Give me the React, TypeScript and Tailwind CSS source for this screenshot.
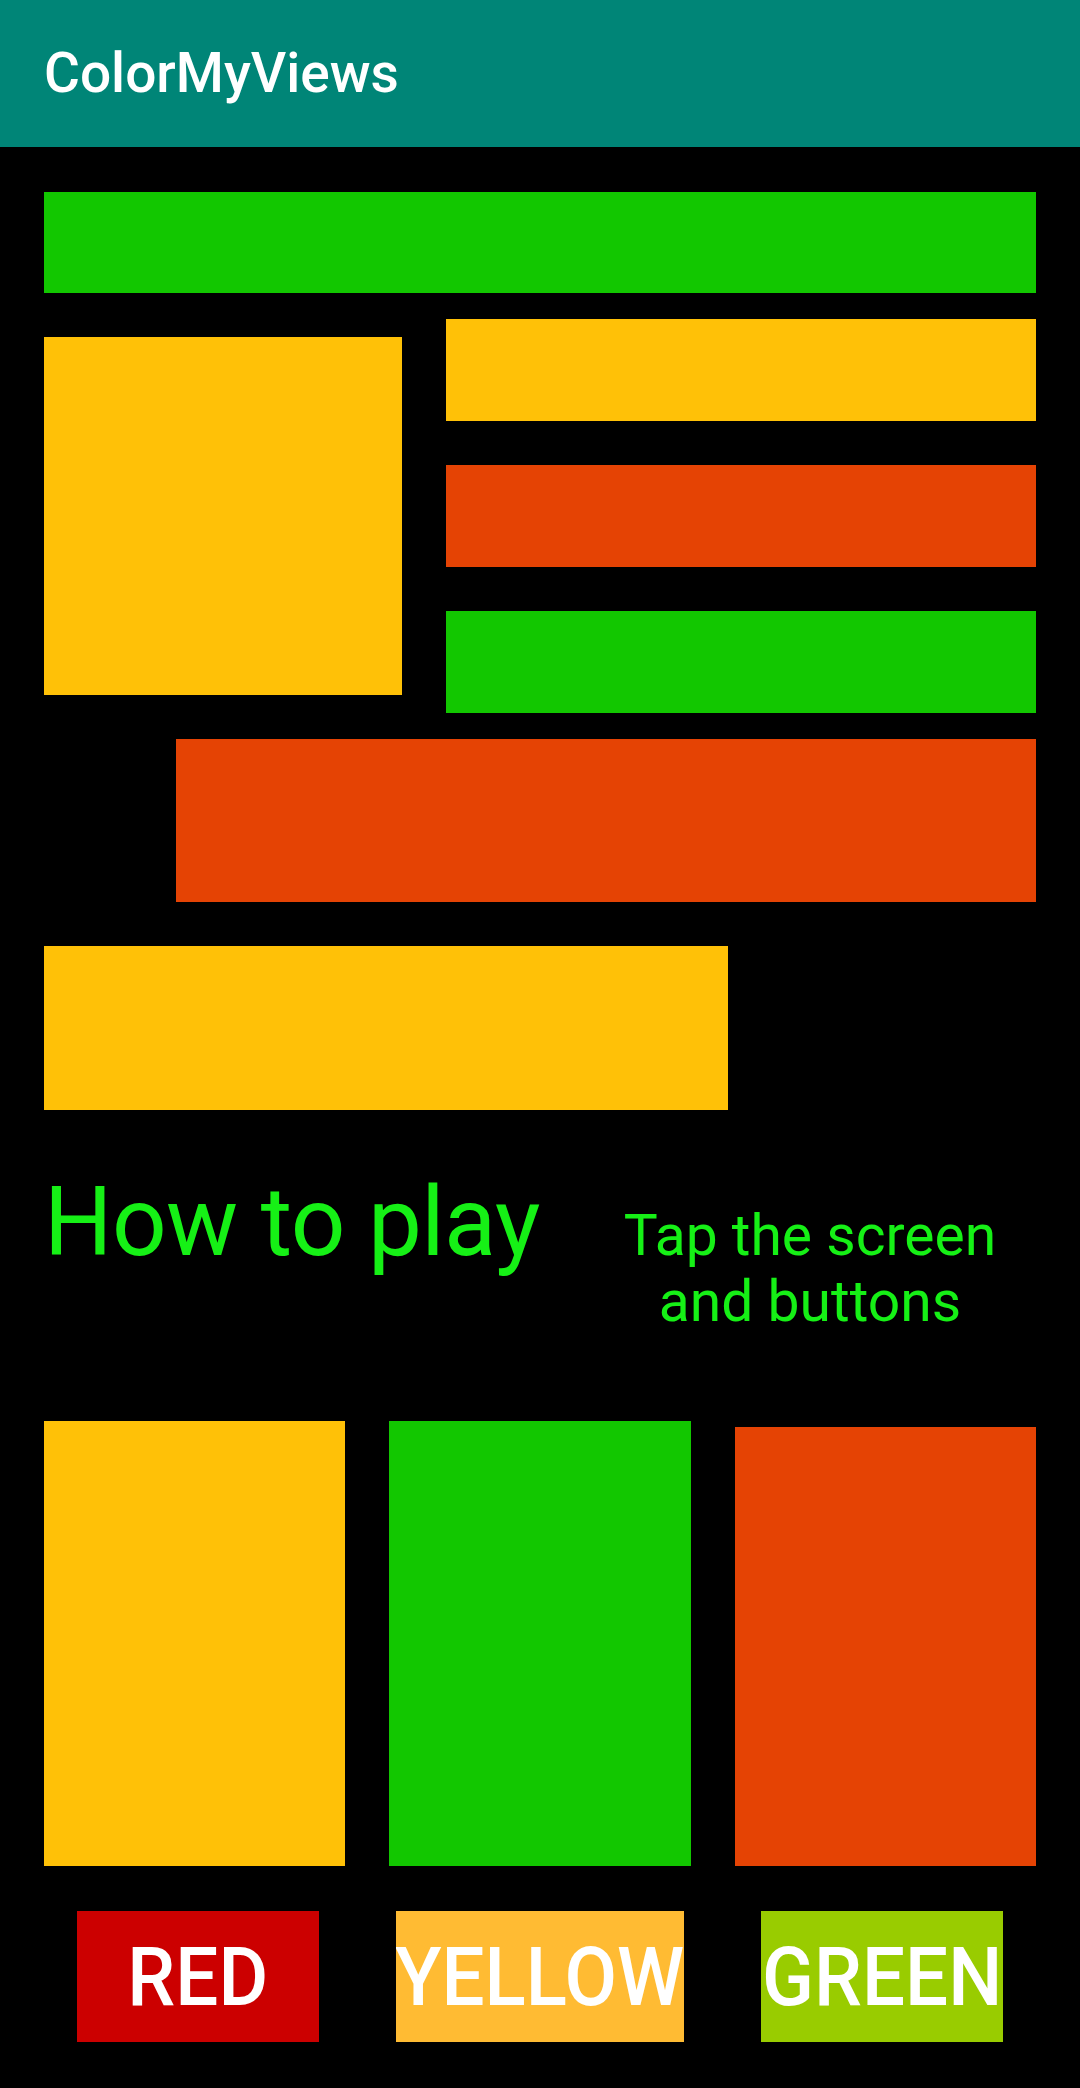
const font = { fontFamily: 'Roboto, "Noto Sans", sans-serif' }

function Box({ className }: { className: string }) {
  return <div className={className} />
}

function ColorButton({ label, className }: { label: string; className: string }) {
  return (
    <button
      className={`flex h-[131px] items-center justify-center overflow-hidden text-[82px] font-medium leading-none text-white ${className}`}
    >
      <span className="inline-block scale-x-[0.93] whitespace-nowrap">{label}</span>
    </button>
  )
}

export default function App() {
  return (
    <div className="flex min-h-[2088px] w-[1080px] flex-col bg-black" style={font}>
      <header className="flex h-[147px] items-center bg-[#008577] pl-[44px]">
        <h1 className="text-[55px] font-medium leading-none text-white">ColorMyViews</h1>
      </header>

      <main className="flex flex-col px-[44px]">
        <Box className="mt-[45px] h-[101px] bg-[#12C700]" />

        <div className="mt-[26px] flex items-center gap-[44px]">
          <Box className="h-[358px] w-[358px] shrink-0 bg-[#FFC107]" />
          <div className="flex flex-1 flex-col gap-[44px]">
            <Box className="h-[102px] bg-[#FFC107]" />
            <Box className="h-[102px] bg-[#E54304]" />
            <Box className="h-[102px] bg-[#12C700]" />
          </div>
        </div>

        <Box className="mt-[26px] ml-[132px] h-[163px] bg-[#E54304]" />
        <Box className="mt-[44px] h-[164px] w-[684px] bg-[#FFC107]" />

        <div className="mt-[64px] flex items-start">
          <h2 className="text-[96px] leading-[96px] tracking-[-0.6px] text-[#16f016]">How to play</h2>
          <p className="ml-auto mt-[29px] w-[452px] text-center text-[57px] leading-[66px] text-[#16f016]">
            Tap the screen
            <br />
            and buttons
          </p>
        </div>

        <div className="mt-[86px] flex items-end gap-[44px]">
          <Box className="h-[445px] flex-1 bg-[#FFC107]" />
          <Box className="h-[445px] flex-1 bg-[#12C700]" />
          <Box className="h-[439px] flex-1 bg-[#E54304]" />
        </div>

        <div className="mt-[45px] flex justify-between px-[33px]">
          <ColorButton label="RED" className="w-[242px] bg-[#CC0000]" />
          <ColorButton label="YELLOW" className="w-[288px] bg-[#FFBB33]" />
          <ColorButton label="GREEN" className="w-[242px] bg-[#99CC00]" />
        </div>
      </main>
    </div>
  )
}
